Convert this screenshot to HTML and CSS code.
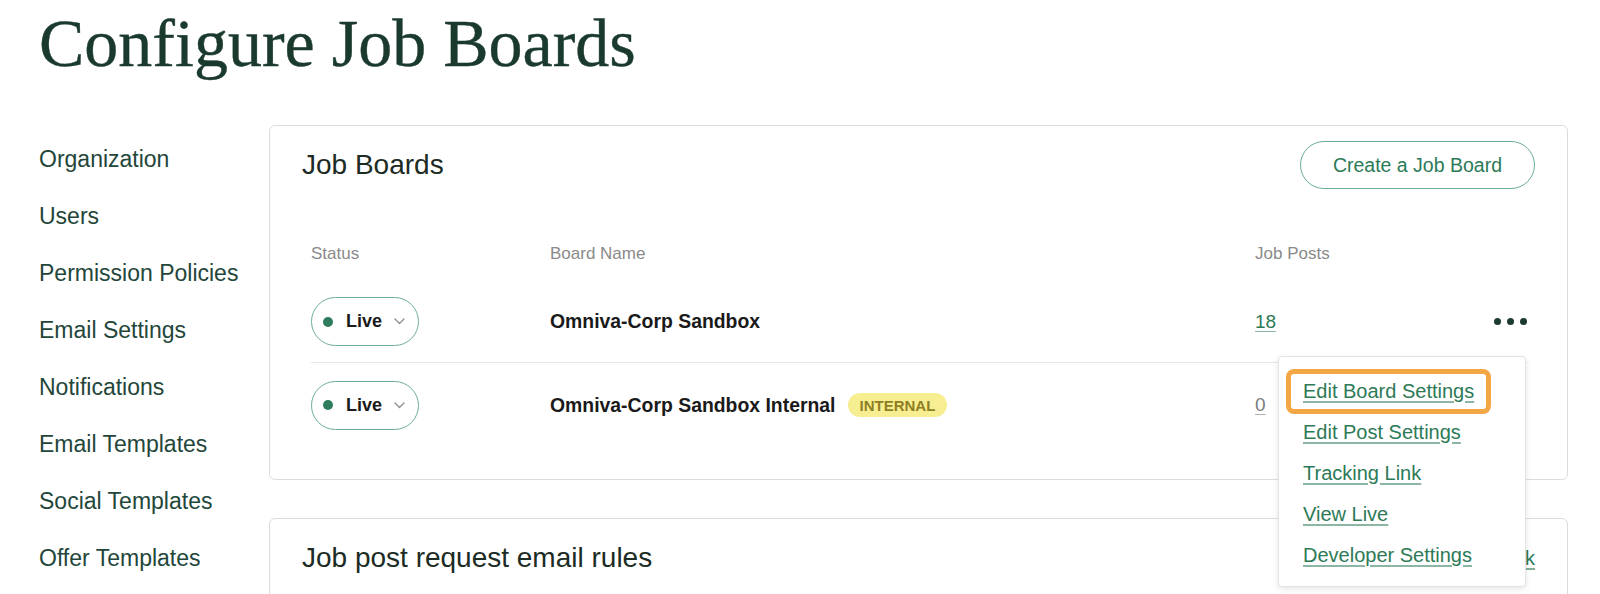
FILE: index.html
```html
<!DOCTYPE html>
<html lang="en">
<head>
<meta charset="utf-8">
<title>Configure Job Boards</title>
<link rel="stylesheet" href="styles.css">
</head>
<body>
  <h1 class="page-title">Configure Job Boards</h1>
  <div class="layout">
    <nav class="sidebar">
      <a class="side-link" href="#">Organization</a>
      <a class="side-link" href="#">Users</a>
      <a class="side-link" href="#">Permission Policies</a>
      <a class="side-link" href="#">Email Settings</a>
      <a class="side-link" href="#">Notifications</a>
      <a class="side-link" href="#">Email Templates</a>
      <a class="side-link" href="#">Social Templates</a>
      <a class="side-link" href="#">Offer Templates</a>
    </nav>
    <main class="content">
      <section class="card">
        <div class="card-header">
          <h2 class="card-title">Job Boards</h2>
          <button class="btn-outline" type="button">Create a Job Board</button>
        </div>
        <div class="table">
          <div class="thead">
            <span class="th">Status</span>
            <span class="th">Board Name</span>
            <span class="th">Job Posts</span>
            <span class="th"></span>
          </div>
          <div class="row row-first">
            <div class="cell">
              <button class="status-pill" type="button">
                <span class="dot"></span>
                <span class="status-text">Live</span>
                <svg class="chev" width="11" height="7" viewBox="0 0 11 7"><polyline points="1,1 5.5,5.5 10,1" fill="none" stroke="#8c8c8c" stroke-width="1.3" stroke-linecap="round" stroke-linejoin="round"/></svg>
              </button>
            </div>
            <div class="cell name">Omniva-Corp Sandbox</div>
            <div class="cell"><a class="count" href="#">18</a></div>
            <div class="cell actions">
              <span class="more"><i></i><i></i><i></i></span>
            </div>
            <div class="menu">
              <a class="menu-link focused" href="#">Edit Board Settings</a>
              <a class="menu-link" href="#">Edit Post Settings</a>
              <a class="menu-link" href="#">Tracking Link</a>
              <a class="menu-link" href="#">View Live</a>
              <a class="menu-link" href="#">Developer Settings</a>
            </div>
          </div>
          <div class="row">
            <div class="cell">
              <button class="status-pill" type="button">
                <span class="dot"></span>
                <span class="status-text">Live</span>
                <svg class="chev" width="11" height="7" viewBox="0 0 11 7"><polyline points="1,1 5.5,5.5 10,1" fill="none" stroke="#8c8c8c" stroke-width="1.3" stroke-linecap="round" stroke-linejoin="round"/></svg>
              </button>
            </div>
            <div class="cell name">Omniva-Corp Sandbox Internal <span class="badge">INTERNAL</span></div>
            <div class="cell"><a class="count zero" href="#">0</a></div>
            <div class="cell actions"></div>
          </div>
        </div>
      </section>
      <section class="card card-second">
        <div class="card-header">
          <h2 class="card-title">Job post request email rules</h2>
          <a class="text-link" href="#">Add Rule Link</a>
        </div>
      </section>
    </main>
  </div>
</body>
</html>
```

FILE: styles.css
```css
* { box-sizing: border-box; }

html, body { margin: 0; background: #ffffff; }

body {
  padding: 0 32px 0 39px;
  font-family: "Liberation Sans", Arial, sans-serif;
  color: #1d2a24;
  overflow: hidden;
}

.page-title {
  margin: 0;
  padding-top: 9px;
  font-family: "Liberation Serif", "Times New Roman", serif;
  font-weight: 400;
  font-size: 68px;
  line-height: 68px;
  color: #1b3a2e;
  -webkit-text-stroke: 0.4px #1b3a2e;
}

.layout {
  display: flex;
  margin-top: 48px;
}

.sidebar {
  width: 230px;
  flex: none;
  display: flex;
  flex-direction: column;
  padding-top: 6px;
}

.side-link {
  display: block;
  height: 57px;
  line-height: 57px;
  font-size: 23px;
  color: #23463a;
  text-decoration: none;
}

.content { flex: 1; min-width: 0; }

.card {
  border: 1px solid #dcdcdc;
  border-radius: 6px;
  padding: 15px 32px 32px 32px;
  background: #fff;
}

.card-second {
  margin-top: 38px;
  height: 160px;
}

.card-header {
  display: flex;
  align-items: center;
  justify-content: space-between;
  height: 48px;
}

.card-title {
  margin: 0;
  font-size: 28px;
  font-weight: 400;
  color: #1c2b24;
}

.btn-outline {
  height: 48px;
  padding: 0 32px;
  border: 1px solid #6dae92;
  border-radius: 24px;
  background: #fff;
  font-family: "Liberation Sans", Arial, sans-serif;
  font-size: 19.5px;
  color: #2b7a57;
}

.text-link {
  font-size: 20px;
  color: #2d7a57;
  text-decoration: underline;
  text-decoration-color: rgba(45, 122, 87, 0.6);
  text-underline-offset: 3px;
}

.table {
  margin: 45px 8px 0 9px;
}

.thead,
.row {
  display: grid;
  grid-template-columns: 239px 705px 1fr auto;
  align-items: center;
}

.thead {
  height: 40px;
  margin-bottom: 7px;
}

.th {
  font-size: 17px;
  color: #8a8a8a;
}

.row {
  height: 84px;
  position: relative;
}

.row-first {
  height: 82px;
  border-bottom: 1px solid #e7e7e7;
}

.cell { display: flex; align-items: center; }

.name {
  font-size: 19.4px;
  font-weight: 700;
  color: #1a1a1a;
  gap: 12px;
}

.status-pill {
  display: flex;
  align-items: center;
  width: 108px;
  height: 49px;
  padding: 0 0 0 11px;
  border: 1px solid #6dae92;
  border-radius: 25px;
  background: #fff;
  font-family: "Liberation Sans", Arial, sans-serif;
}

.dot {
  width: 10px;
  height: 10px;
  border-radius: 50%;
  background: #2f7d5c;
  margin-right: 13px;
}

.status-text {
  font-size: 18px;
  font-weight: 700;
  color: #1a1a1a;
  margin-right: 12px;
}

.chev { display: block; }

.badge {
  display: inline-flex;
  align-items: center;
  height: 24px;
  padding: 0 12px;
  border-radius: 12px;
  background: #f7ee91;
  color: #8f7e22;
  font-size: 15px;
  font-weight: 700;
}

.count {
  font-size: 19px;
  color: #2d7a57;
  text-decoration: underline;
  text-decoration-color: rgba(45, 122, 87, 0.55);
  text-underline-offset: 3px;
}

.count.zero {
  color: #7c7c7c;
  text-decoration-color: rgba(124, 124, 124, 0.6);
}

.actions { justify-content: flex-end; }

.more {
  display: flex;
  gap: 6px;
}

.more i {
  width: 7px;
  height: 7px;
  border-radius: 50%;
  background: #1c3a2e;
}

.menu {
  position: absolute;
  top: 75px;
  right: 1px;
  width: 248px;
  padding: 17px 0 13px 12px;
  display: flex;
  flex-direction: column;
  align-items: flex-start;
  gap: 6px;
  background: #fff;
  border: 1px solid #e3e3e3;
  border-radius: 4px;
  box-shadow: 0 2px 6px rgba(0, 0, 0, 0.10);
  z-index: 5;
}

.menu-link {
  display: inline-block;
  padding: 5px 12px;
  line-height: 25px;
  font-size: 20px;
  color: #2d7a57;
  text-decoration: underline;
  text-decoration-color: rgba(45, 122, 87, 0.55);
  text-underline-offset: 3px;
  border-radius: 3px;
}

.menu-link.focused {
  outline: 5px solid #f3a644;
  outline-offset: 0;
}
```
